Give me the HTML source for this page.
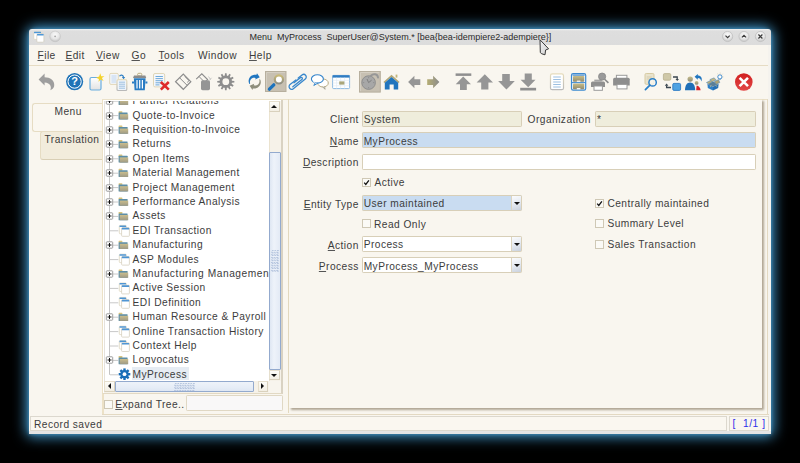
<!DOCTYPE html>
<html><head><meta charset="utf-8">
<style>
*{box-sizing:border-box}
html,body{margin:0;padding:0}
body{width:800px;height:463px;background:#000;position:relative;overflow:hidden;font-family:"Liberation Sans",sans-serif;color:#2b2b2b}
.a{position:absolute}
.t{position:absolute;white-space:nowrap;font-size:10.2px;letter-spacing:.45px;line-height:13.4px;color:#3c3c3c}
u{text-decoration:underline;text-decoration-thickness:1px;text-underline-offset:1px;text-decoration-color:#555}
#win{left:29px;top:29px;width:742px;height:405px;background:#f9f6ef;box-shadow:0 0 3px 1px rgba(75,155,205,.5),0 0 13px 3px #4096c8;border-radius:7px 7px 3px 3px}
#title{left:29px;top:29px;width:742px;height:15.5px;background:linear-gradient(#f2f2f2,#dedede 12%,#dcdcdc);border-radius:3px 3px 0 0}
.wbtn{position:absolute;width:10px;height:10px;border-radius:50%;background:radial-gradient(circle at 50% 30%,#fdfdfd,#e4e4e4 60%,#b9b9b9);box-shadow:0 0.5px 0.5px #999}
.fld{position:absolute;height:16px;border:1px solid #d8cfb8;border-radius:1.2px;background:#fff}
.cb{position:absolute;width:9px;height:9px;border:1px solid #cfc8b5;background:#fbfaf6}
.dd{position:absolute;right:0;top:0;width:10px;height:100%;background:linear-gradient(160deg,#fbfcfe,#e3e8f0 55%,#c9d1dd);border-left:1px solid #ddd5c0}
.dd:after{content:"";position:absolute;left:2px;top:6px;border-left:3px solid transparent;border-right:3px solid transparent;border-top:3px solid #111}
</style></head>
<body>
<div id="win" class="a"></div>
<div id="title" class="a"></div>
<!-- title icons -->
<svg class="a" style="left:29px;top:28px" width="40" height="18" viewBox="29 28 40 18">
<defs><radialGradient id="gBtn" cx="50%" cy="35%" r="65%"><stop offset="0" stop-color="#fafafa"/><stop offset=".6" stop-color="#e6e6e6"/><stop offset="1" stop-color="#c4c4c4"/></radialGradient></defs>
<rect x="33.8" y="31.8" width="7.4" height="7.6" rx="1" fill="#fff" stroke="#d9d2bc" stroke-width=".7"/>
<rect x="34" y="31.8" width="7" height="1.5" rx=".5" fill="#4f97d6"/>
<rect x="36.8" y="33.9" width="7.1" height="8.3" rx="1" fill="#fff" stroke="#d0cbbb" stroke-width=".7"/>
<rect x="37" y="33.9" width="6.7" height="1.5" rx=".5" fill="#4f97d6"/>
<circle cx="55.1" cy="36.4" r="5.3" fill="url(#gBtn)" stroke="#c2c2c2" stroke-width=".6"/>
<circle cx="55.1" cy="36.4" r=".8" fill="#999"/>
</svg>
<div class="t" style="left:249.5px;top:31.1px;font-size:9px;letter-spacing:0;color:#2a2a2a">Menu&nbsp; MyProcess&nbsp; SuperUser@System.* [bea{bea-idempiere2-adempiere}]</div>
<svg class="a" style="left:715px;top:28px" width="56" height="18" viewBox="715 28 56 18">
<g stroke="#bdbdbd" stroke-width=".7" fill="url(#gBtn)">
<circle cx="727.6" cy="36.5" r="5.1"/><circle cx="744" cy="36.5" r="5.1"/><circle cx="760.4" cy="36.5" r="5.1"/></g>
<g stroke="#3a3a3a" stroke-width="1.2" fill="none">
<path d="M725.5 35.6 L727.6 37.6 L729.7 35.6"/>
<path d="M741.9 37.4 L744 35.4 L746.1 37.4"/>
<path d="M758.4 34.5 L762.4 38.5 M762.4 34.5 L758.4 38.5"/></g>
</svg>
<div class="a" style="left:768.6px;top:44.5px;width:1px;height:21px;background:#e6dcc4"></div>
<!-- menu bar -->
<div class="a" style="left:29px;top:65px;width:742px;height:1px;background:#e6dcc4"></div>
<div class="t" style="left:37.5px;top:49px"><u>F</u>ile</div>
<div class="t" style="left:65.5px;top:49px"><u>E</u>dit</div>
<div class="t" style="left:96px;top:49px"><u>V</u>iew</div>
<div class="t" style="left:131.5px;top:49px"><u>G</u>o</div>
<div class="t" style="left:158.5px;top:49px"><u>T</u>ools</div>
<div class="t" style="left:198px;top:49px">Window</div>
<div class="t" style="left:249px;top:49px"><u>H</u>elp</div>

<!-- tabs -->
<div class="a" style="left:32px;top:103px;width:72px;height:29px;border:1px solid #e6dcc3;border-right:none;border-radius:3px 0 0 3px;background:#faf7f0"></div>
<div class="t" style="left:54.5px;top:104.5px">Menu</div>
<div class="a" style="left:40px;top:131px;width:64px;height:28.6px;border:1px solid #e6dcc3;border-bottom-color:#d9cfb5;border-right:none;border-radius:3px 0 0 3px;background:#f2ecdc"></div>
<div class="t" style="left:44.5px;top:133px">Translation</div>

<!-- tree panel -->
<div class="a" style="left:102px;top:99.3px;width:1.5px;height:315px;background:#ece1c6"></div>
<div class="a" style="left:102px;top:413.8px;width:183px;height:1px;background:#e3d9c2"></div>
<div class="a" style="left:102px;top:99.3px;width:181px;height:294.4px;border-left:1.5px solid #ece1c6;border-top:1.3px solid #ece2c8;border-right:2.2px solid #d9d2c2;border-bottom:1.6px solid #e2d9c4;background:#fff"></div>
<div class="a" style="left:103.5px;top:100.6px;width:1.2px;height:281px;background:#e5e2dc"></div>
<!-- tree content -->
<div class="a" style="left:104px;top:100.5px;width:165px;height:281px;overflow:hidden">
<div class="a" style="left:27.9px;top:266.7px;width:57px;height:13.2px;background:#e6ecf3"></div>
<svg class="a" style="left:0;top:0" width="165" height="281" viewBox="104 100.5 165 281">
<defs><linearGradient id="gFold" x1="0" y1="0" x2="0" y2="1"><stop offset="0" stop-color="#cbbd8c"/><stop offset="1" stop-color="#9d9a86"/></linearGradient></defs>
<path d="M109.5 99.5 V374.3" stroke="#c4c4c4" stroke-width="1"/>
<path d="M110 100.70 H118.3" stroke="#c8c8c8" stroke-width="1"/>
<rect x="106.3" y="97.30" width="6.4" height="6.4" rx=".7" fill="#fff" stroke="#999" stroke-width=".95"/>
<path d="M107.5 100.50 h4 M109.5 98.50 v4" stroke="#111" stroke-width="1"/>
<rect x="118.6" y="96.30" width="3.8" height="2" rx=".6" fill="#d8c37c"/>
<rect x="118.6" y="97.70" width="9" height="6.8" rx=".5" fill="#5d8ea6"/>
<rect x="119.7" y="99.30" width="8.5" height="5.2" fill="url(#gFold)"/>
<path d="M110 115.10 H118.3" stroke="#c8c8c8" stroke-width="1"/>
<rect x="106.3" y="112.30" width="6.4" height="6.4" rx=".7" fill="#fff" stroke="#999" stroke-width=".95"/>
<path d="M107.5 115.50 h4 M109.5 113.50 v4" stroke="#111" stroke-width="1"/>
<rect x="118.6" y="110.70" width="3.8" height="2" rx=".6" fill="#d8c37c"/>
<rect x="118.6" y="112.10" width="9" height="6.8" rx=".5" fill="#5d8ea6"/>
<rect x="119.7" y="113.70" width="8.5" height="5.2" fill="url(#gFold)"/>
<path d="M110 129.50 H118.3" stroke="#c8c8c8" stroke-width="1"/>
<rect x="106.3" y="126.30" width="6.4" height="6.4" rx=".7" fill="#fff" stroke="#999" stroke-width=".95"/>
<path d="M107.5 129.50 h4 M109.5 127.50 v4" stroke="#111" stroke-width="1"/>
<rect x="118.6" y="125.10" width="3.8" height="2" rx=".6" fill="#d8c37c"/>
<rect x="118.6" y="126.50" width="9" height="6.8" rx=".5" fill="#5d8ea6"/>
<rect x="119.7" y="128.10" width="8.5" height="5.2" fill="url(#gFold)"/>
<path d="M110 143.90 H118.3" stroke="#c8c8c8" stroke-width="1"/>
<rect x="106.3" y="140.30" width="6.4" height="6.4" rx=".7" fill="#fff" stroke="#999" stroke-width=".95"/>
<path d="M107.5 143.50 h4 M109.5 141.50 v4" stroke="#111" stroke-width="1"/>
<rect x="118.6" y="139.50" width="3.8" height="2" rx=".6" fill="#d8c37c"/>
<rect x="118.6" y="140.90" width="9" height="6.8" rx=".5" fill="#5d8ea6"/>
<rect x="119.7" y="142.50" width="8.5" height="5.2" fill="url(#gFold)"/>
<path d="M110 158.30 H118.3" stroke="#c8c8c8" stroke-width="1"/>
<rect x="106.3" y="155.30" width="6.4" height="6.4" rx=".7" fill="#fff" stroke="#999" stroke-width=".95"/>
<path d="M107.5 158.50 h4 M109.5 156.50 v4" stroke="#111" stroke-width="1"/>
<rect x="118.6" y="153.90" width="3.8" height="2" rx=".6" fill="#d8c37c"/>
<rect x="118.6" y="155.30" width="9" height="6.8" rx=".5" fill="#5d8ea6"/>
<rect x="119.7" y="156.90" width="8.5" height="5.2" fill="url(#gFold)"/>
<path d="M110 172.70 H118.3" stroke="#c8c8c8" stroke-width="1"/>
<rect x="106.3" y="169.30" width="6.4" height="6.4" rx=".7" fill="#fff" stroke="#999" stroke-width=".95"/>
<path d="M107.5 172.50 h4 M109.5 170.50 v4" stroke="#111" stroke-width="1"/>
<rect x="118.6" y="168.30" width="3.8" height="2" rx=".6" fill="#d8c37c"/>
<rect x="118.6" y="169.70" width="9" height="6.8" rx=".5" fill="#5d8ea6"/>
<rect x="119.7" y="171.30" width="8.5" height="5.2" fill="url(#gFold)"/>
<path d="M110 187.10 H118.3" stroke="#c8c8c8" stroke-width="1"/>
<rect x="106.3" y="184.30" width="6.4" height="6.4" rx=".7" fill="#fff" stroke="#999" stroke-width=".95"/>
<path d="M107.5 187.50 h4 M109.5 185.50 v4" stroke="#111" stroke-width="1"/>
<rect x="118.6" y="182.70" width="3.8" height="2" rx=".6" fill="#d8c37c"/>
<rect x="118.6" y="184.10" width="9" height="6.8" rx=".5" fill="#5d8ea6"/>
<rect x="119.7" y="185.70" width="8.5" height="5.2" fill="url(#gFold)"/>
<path d="M110 201.50 H118.3" stroke="#c8c8c8" stroke-width="1"/>
<rect x="106.3" y="198.30" width="6.4" height="6.4" rx=".7" fill="#fff" stroke="#999" stroke-width=".95"/>
<path d="M107.5 201.50 h4 M109.5 199.50 v4" stroke="#111" stroke-width="1"/>
<rect x="118.6" y="197.10" width="3.8" height="2" rx=".6" fill="#d8c37c"/>
<rect x="118.6" y="198.50" width="9" height="6.8" rx=".5" fill="#5d8ea6"/>
<rect x="119.7" y="200.10" width="8.5" height="5.2" fill="url(#gFold)"/>
<path d="M110 215.90 H118.3" stroke="#c8c8c8" stroke-width="1"/>
<rect x="106.3" y="212.30" width="6.4" height="6.4" rx=".7" fill="#fff" stroke="#999" stroke-width=".95"/>
<path d="M107.5 215.50 h4 M109.5 213.50 v4" stroke="#111" stroke-width="1"/>
<rect x="118.6" y="211.50" width="3.8" height="2" rx=".6" fill="#d8c37c"/>
<rect x="118.6" y="212.90" width="9" height="6.8" rx=".5" fill="#5d8ea6"/>
<rect x="119.7" y="214.50" width="8.5" height="5.2" fill="url(#gFold)"/>
<path d="M110 230.30 H118.3" stroke="#c8c8c8" stroke-width="1"/>
<rect x="119.3" y="224.90" width="7" height="8.4" rx=".8" fill="#fff" stroke="#ddd5bf" stroke-width=".8"/>
<rect x="119.5" y="224.90" width="6.6" height="1.6" rx=".5" fill="#4f95d3"/>
<rect x="121.6" y="227.20" width="7.8" height="8.6" rx=".8" fill="#fff" stroke="#d5cfbf" stroke-width=".8"/>
<rect x="121.8" y="227.20" width="7.4" height="1.7" rx=".5" fill="#4f95d3"/>
<path d="M110 244.70 H118.3" stroke="#c8c8c8" stroke-width="1"/>
<rect x="106.3" y="241.30" width="6.4" height="6.4" rx=".7" fill="#fff" stroke="#999" stroke-width=".95"/>
<path d="M107.5 244.50 h4 M109.5 242.50 v4" stroke="#111" stroke-width="1"/>
<rect x="118.6" y="240.30" width="3.8" height="2" rx=".6" fill="#d8c37c"/>
<rect x="118.6" y="241.70" width="9" height="6.8" rx=".5" fill="#5d8ea6"/>
<rect x="119.7" y="243.30" width="8.5" height="5.2" fill="url(#gFold)"/>
<path d="M110 259.10 H118.3" stroke="#c8c8c8" stroke-width="1"/>
<rect x="119.3" y="253.70" width="7" height="8.4" rx=".8" fill="#fff" stroke="#ddd5bf" stroke-width=".8"/>
<rect x="119.5" y="253.70" width="6.6" height="1.6" rx=".5" fill="#4f95d3"/>
<rect x="121.6" y="256.00" width="7.8" height="8.6" rx=".8" fill="#fff" stroke="#d5cfbf" stroke-width=".8"/>
<rect x="121.8" y="256.00" width="7.4" height="1.7" rx=".5" fill="#4f95d3"/>
<path d="M110 273.50 H118.3" stroke="#c8c8c8" stroke-width="1"/>
<rect x="106.3" y="270.30" width="6.4" height="6.4" rx=".7" fill="#fff" stroke="#999" stroke-width=".95"/>
<path d="M107.5 273.50 h4 M109.5 271.50 v4" stroke="#111" stroke-width="1"/>
<rect x="118.6" y="269.10" width="3.8" height="2" rx=".6" fill="#d8c37c"/>
<rect x="118.6" y="270.50" width="9" height="6.8" rx=".5" fill="#5d8ea6"/>
<rect x="119.7" y="272.10" width="8.5" height="5.2" fill="url(#gFold)"/>
<path d="M110 287.90 H118.3" stroke="#c8c8c8" stroke-width="1"/>
<rect x="119.3" y="282.50" width="7" height="8.4" rx=".8" fill="#fff" stroke="#ddd5bf" stroke-width=".8"/>
<rect x="119.5" y="282.50" width="6.6" height="1.6" rx=".5" fill="#4f95d3"/>
<rect x="121.6" y="284.80" width="7.8" height="8.6" rx=".8" fill="#fff" stroke="#d5cfbf" stroke-width=".8"/>
<rect x="121.8" y="284.80" width="7.4" height="1.7" rx=".5" fill="#4f95d3"/>
<path d="M110 302.30 H118.3" stroke="#c8c8c8" stroke-width="1"/>
<rect x="119.3" y="296.90" width="7" height="8.4" rx=".8" fill="#fff" stroke="#ddd5bf" stroke-width=".8"/>
<rect x="119.5" y="296.90" width="6.6" height="1.6" rx=".5" fill="#4f95d3"/>
<rect x="121.6" y="299.20" width="7.8" height="8.6" rx=".8" fill="#fff" stroke="#d5cfbf" stroke-width=".8"/>
<rect x="121.8" y="299.20" width="7.4" height="1.7" rx=".5" fill="#4f95d3"/>
<path d="M110 316.70 H118.3" stroke="#c8c8c8" stroke-width="1"/>
<rect x="106.3" y="313.30" width="6.4" height="6.4" rx=".7" fill="#fff" stroke="#999" stroke-width=".95"/>
<path d="M107.5 316.50 h4 M109.5 314.50 v4" stroke="#111" stroke-width="1"/>
<rect x="118.6" y="312.30" width="3.8" height="2" rx=".6" fill="#d8c37c"/>
<rect x="118.6" y="313.70" width="9" height="6.8" rx=".5" fill="#5d8ea6"/>
<rect x="119.7" y="315.30" width="8.5" height="5.2" fill="url(#gFold)"/>
<path d="M110 331.10 H118.3" stroke="#c8c8c8" stroke-width="1"/>
<rect x="119.3" y="325.70" width="7" height="8.4" rx=".8" fill="#fff" stroke="#ddd5bf" stroke-width=".8"/>
<rect x="119.5" y="325.70" width="6.6" height="1.6" rx=".5" fill="#4f95d3"/>
<rect x="121.6" y="328.00" width="7.8" height="8.6" rx=".8" fill="#fff" stroke="#d5cfbf" stroke-width=".8"/>
<rect x="121.8" y="328.00" width="7.4" height="1.7" rx=".5" fill="#4f95d3"/>
<path d="M110 345.50 H118.3" stroke="#c8c8c8" stroke-width="1"/>
<rect x="119.3" y="340.10" width="7" height="8.4" rx=".8" fill="#fff" stroke="#ddd5bf" stroke-width=".8"/>
<rect x="119.5" y="340.10" width="6.6" height="1.6" rx=".5" fill="#4f95d3"/>
<rect x="121.6" y="342.40" width="7.8" height="8.6" rx=".8" fill="#fff" stroke="#d5cfbf" stroke-width=".8"/>
<rect x="121.8" y="342.40" width="7.4" height="1.7" rx=".5" fill="#4f95d3"/>
<path d="M110 359.90 H118.3" stroke="#c8c8c8" stroke-width="1"/>
<rect x="106.3" y="356.30" width="6.4" height="6.4" rx=".7" fill="#fff" stroke="#999" stroke-width=".95"/>
<path d="M107.5 359.50 h4 M109.5 357.50 v4" stroke="#111" stroke-width="1"/>
<rect x="118.6" y="355.50" width="3.8" height="2" rx=".6" fill="#d8c37c"/>
<rect x="118.6" y="356.90" width="9" height="6.8" rx=".5" fill="#5d8ea6"/>
<rect x="119.7" y="358.50" width="8.5" height="5.2" fill="url(#gFold)"/>
<path d="M110 374.30 H118.3" stroke="#c8c8c8" stroke-width="1"/>
<g transform="translate(124.5 373.70)" fill="#1a6fb8"><circle r="4.2"/><rect x="-1.2" y="-5.8" width="2.4" height="2.6" transform="rotate(0)"/><rect x="-1.2" y="-5.8" width="2.4" height="2.6" transform="rotate(45)"/><rect x="-1.2" y="-5.8" width="2.4" height="2.6" transform="rotate(90)"/><rect x="-1.2" y="-5.8" width="2.4" height="2.6" transform="rotate(135)"/><rect x="-1.2" y="-5.8" width="2.4" height="2.6" transform="rotate(180)"/><rect x="-1.2" y="-5.8" width="2.4" height="2.6" transform="rotate(225)"/><rect x="-1.2" y="-5.8" width="2.4" height="2.6" transform="rotate(270)"/><rect x="-1.2" y="-5.8" width="2.4" height="2.6" transform="rotate(315)"/><circle r="1.9" fill="#fff"/></g>
</svg>
<div class="t" style="left:28.6px;top:-6.4px">Partner Relations</div>
<div class="t" style="left:28.6px;top:8.0px">Quote-to-Invoice</div>
<div class="t" style="left:28.6px;top:22.4px">Requisition-to-Invoice</div>
<div class="t" style="left:28.6px;top:36.8px">Returns</div>
<div class="t" style="left:28.6px;top:51.2px">Open Items</div>
<div class="t" style="left:28.6px;top:65.6px">Material Management</div>
<div class="t" style="left:28.6px;top:80.0px">Project Management</div>
<div class="t" style="left:28.6px;top:94.4px">Performance Analysis</div>
<div class="t" style="left:28.6px;top:108.8px">Assets</div>
<div class="t" style="left:28.6px;top:123.2px">EDI Transaction</div>
<div class="t" style="left:28.6px;top:137.6px">Manufacturing</div>
<div class="t" style="left:28.6px;top:152.0px">ASP Modules</div>
<div class="t" style="left:28.6px;top:166.4px;letter-spacing:.55px">Manufacturing Management</div>
<div class="t" style="left:28.6px;top:180.8px">Active Session</div>
<div class="t" style="left:28.6px;top:195.2px">EDI Definition</div>
<div class="t" style="left:28.6px;top:209.6px">Human Resource &amp; Payroll</div>
<div class="t" style="left:28.6px;top:224.0px">Online Transaction History</div>
<div class="t" style="left:28.6px;top:238.4px">Context Help</div>
<div class="t" style="left:28.6px;top:252.8px">Logvocatus</div>
<div class="t" style="left:28.6px;top:267.2px">MyProcess</div>
</div>
<!-- v scrollbar -->
<div class="a" style="left:268.8px;top:100.5px;width:12px;height:281px;background:#f6f2e9;border-left:1px solid #ebe3cf"></div>
<div class="a" style="left:268.8px;top:101.3px;width:11.5px;height:11px;background:linear-gradient(#fdfcf8,#f3efe4);border:1px solid #e6dfcd;border-right-color:#d9d1bd;border-bottom-color:#d9d1bd"></div>
<div class="a" style="left:271.4px;top:104.6px;width:0;height:0;border-left:3.3px solid transparent;border-right:3.3px solid transparent;border-bottom:3.6px solid #111"></div>
<div class="a" style="left:268.9px;top:152.2px;width:12px;height:217.6px;border:1px solid #93aace;border-radius:1px;background:linear-gradient(90deg,#dfe7f3,#eef3fa 40%,#e3eaf5)"></div>
<div class="a" style="left:271px;top:250.4px;width:8.4px;height:21.6px;background:repeating-conic-gradient(#b3c3dd 0 25%,transparent 0 50%) 0 0/2.6px 2.6px"></div>
<div class="a" style="left:268.8px;top:369.8px;width:11.5px;height:10.5px;background:linear-gradient(#fdfcf8,#f3efe4);border:1px solid #e6dfcd;border-right-color:#d9d1bd;border-bottom-color:#d9d1bd"></div>
<div class="a" style="left:271.4px;top:373.6px;width:0;height:0;border-left:3.3px solid transparent;border-right:3.3px solid transparent;border-top:3.6px solid #111"></div>
<!-- h scrollbar -->
<div class="a" style="left:103.5px;top:380.8px;width:166px;height:12px;background:#f6f2e9"></div>
<div class="a" style="left:104.1px;top:380.9px;width:10.6px;height:11.4px;background:linear-gradient(#fdfcf8,#f3efe4);border:1px solid #e6dfcd;border-right-color:#d9d1bd;border-bottom-color:#d9d1bd"></div>
<div class="a" style="left:108.2px;top:383.4px;width:0;height:0;border-top:3.3px solid transparent;border-bottom:3.3px solid transparent;border-right:3.6px solid #111"></div>
<div class="a" style="left:115px;top:380.9px;width:138.8px;height:11.4px;border:1px solid #93aace;border-radius:1px;background:linear-gradient(#eef3fa,#e6edf7 60%,#dfe7f3)"></div>
<div class="a" style="left:173.5px;top:383.2px;width:21.6px;height:7.6px;background:repeating-conic-gradient(#b3c3dd 0 25%,transparent 0 50%) 0 0/2.6px 2.6px"></div>
<div class="a" style="left:257.6px;top:380.9px;width:10.2px;height:11.4px;background:linear-gradient(#fdfcf8,#f3efe4);border:1px solid #e6dfcd;border-right-color:#d9d1bd;border-bottom-color:#d9d1bd"></div>
<div class="a" style="left:261.4px;top:383.4px;width:0;height:0;border-top:3.3px solid transparent;border-bottom:3.3px solid transparent;border-left:3.6px solid #111"></div>
<div class="a" style="left:268.8px;top:380.8px;width:12px;height:12px;background:#f8f5ee"></div>


<!-- split container top line -->
<div class="a" style="left:102px;top:99px;width:667px;height:1.4px;background:#ebe1c8"></div>
<!-- form panel -->
<div class="a" style="left:287.6px;top:99.4px;width:1.4px;height:313.5px;background:#e3d9bf"></div>
<div class="a" style="left:288.5px;top:99.4px;width:473.3px;height:308.6px;border-top:1px solid #ebe1c8;box-shadow:1.6px 1.6px 2px rgba(135,122,98,.65);background:#f9f6ef"></div>
<div class="a" style="left:767.2px;top:99px;width:1px;height:315.5px;background:#e3d9c2"></div><div class="a" style="left:768.3px;top:44.5px;width:2.7px;height:389.5px;background:#f5f3ee"></div>
<div class="a" style="left:285px;top:413.8px;width:483.5px;height:1px;background:#e3d9c2"></div>

<div class="t" style="right:441.2px;top:113.3px;text-align:right">Client</div>
<div class="fld" style="left:362px;top:110.6px;width:160px;background:#efeddc"></div>
<div class="t" style="left:363.7px;top:113.3px">System</div>
<div class="t" style="left:527.6px;top:113.3px">Organization</div>
<div class="fld" style="left:595px;top:110.6px;width:160.6px;background:#efeddc"></div>
<div class="t" style="left:597px;top:113.3px">*</div>

<div class="t" style="right:441.2px;top:134.7px;text-align:right"><u>N</u>ame</div>
<div class="fld" style="left:362px;top:132.4px;width:393.6px;background:#c9dcf1"></div>
<div class="t" style="left:363.7px;top:134.7px">MyProcess</div>

<div class="t" style="right:441.2px;top:156.1px;text-align:right"><u>D</u>escription</div>
<div class="fld" style="left:362px;top:154px;width:393.6px;background:#fff"></div>

<div class="cb" style="left:362px;top:178.2px"></div>
<svg class="a" style="left:362px;top:178.2px" width="9" height="9" viewBox="0 0 9 9"><path d="M2.2 4.6 L3.8 6.4 L6.9 2.4" fill="none" stroke="#111" stroke-width="1.3"/></svg>
<div class="t" style="left:374.4px;top:176.3px">Active</div>

<div class="t" style="right:441.2px;top:197.5px;text-align:right"><u>E</u>ntity Type</div>
<div class="fld" style="left:362px;top:195.3px;width:159.8px;height:15.6px;background:#c9dcf1"><div class="dd"></div></div>
<div class="t" style="left:363.7px;top:197.2px">User maintained</div>
<div class="cb" style="left:594.6px;top:199.4px"></div>
<svg class="a" style="left:594.6px;top:199.4px" width="9" height="9" viewBox="0 0 9 9"><path d="M2.2 4.6 L3.8 6.4 L6.9 2.4" fill="none" stroke="#111" stroke-width="1.3"/></svg>
<div class="t" style="left:607.4px;top:197.1px">Centrally maintained</div>

<div class="cb" style="left:362px;top:219.4px"></div>
<div class="t" style="left:374px;top:217.7px">Read Only</div>
<div class="cb" style="left:594.6px;top:219.4px"></div>
<div class="t" style="left:607.4px;top:217.3px">Summary Level</div>

<div class="t" style="right:441.2px;top:238.8px;text-align:right"><u>A</u>ction</div>
<div class="fld" style="left:362px;top:235.9px;width:159.8px;height:15.8px;background:#fff"><div class="dd"></div></div>
<div class="t" style="left:363.7px;top:238.0px">Process</div>
<div class="cb" style="left:594.6px;top:240.4px"></div>
<div class="t" style="left:607.4px;top:237.9px">Sales Transaction</div>

<div class="t" style="right:441.2px;top:259.8px;text-align:right"><u>P</u>rocess</div>
<div class="fld" style="left:362px;top:257.2px;width:159.8px;height:16.2px;background:#fff"><div class="dd"></div></div>
<div class="t" style="left:363.7px;top:259.5px">MyProcess_MyProcess</div>

<!-- expand tree -->
<div class="cb" style="left:103.6px;top:399.8px"></div>
<div class="t" style="left:115.3px;top:398.4px"><u>E</u>xpand Tree..</div>
<div class="fld" style="left:185.8px;top:395.2px;width:97px;height:16.2px;background:#f9f8f8;border-color:#e0d8c4"></div>

<!-- status bar -->
<div class="a" style="left:30px;top:416px;width:697px;height:15px;border:1px solid #dcd8ce;background:#faf7f0"></div>
<div class="t" style="left:34px;top:418px">Record saved</div>
<div class="a" style="left:728.5px;top:416px;width:40px;height:15px;border:1px solid #dcd8ce;background:#faf7f0"></div>
<div class="t" style="left:732.6px;top:416.8px;color:#2f2fea;letter-spacing:.6px">[&nbsp; 1/1 ]</div>
<div class="a" style="left:29px;top:431px;width:742px;height:3px;background:#e4e4e4"></div>


<svg class="a" style="left:0;top:0" width="800" height="463" viewBox="0 0 800 463">
<defs>
 <linearGradient id="gDoc" x1="0" y1="0" x2="0" y2="1"><stop offset="0" stop-color="#e6dcbc"/><stop offset="1" stop-color="#b9b9b9"/></linearGradient>
 <linearGradient id="gOl" x1="0" y1="0" x2="1" y2="0"><stop offset="0" stop-color="#b5ad74"/><stop offset="1" stop-color="#8c8c8c"/></linearGradient>
 <linearGradient id="gOlV" x1="0" y1="0" x2="0" y2="1"><stop offset="0" stop-color="#c9bc84"/><stop offset="1" stop-color="#8f8a70"/></linearGradient>
 <linearGradient id="gNew" x1="0" y1="0" x2="0" y2="1"><stop offset="0" stop-color="#ffffff"/><stop offset="1" stop-color="#e2e2e2"/></linearGradient>
 <linearGradient id="gLens" x1="0" y1="0" x2="0" y2="1"><stop offset="0" stop-color="#c9b977"/><stop offset="1" stop-color="#8f8f84"/></linearGradient>
 <linearGradient id="gRed" x1="0" y1="0" x2="0" y2="1"><stop offset="0" stop-color="#d11f1f"/><stop offset="1" stop-color="#e24848"/></linearGradient>
</defs>
<!-- undo -->
<path d="M38.6 79.6 L44.6 73.6 L44.6 77.2 C50 77.2 55 80.5 54.2 86 C53.8 88 52 89.6 50.3 90.3 C51.8 87 50.5 83 44.6 82.6 L44.6 85.6 Z" fill="#9e9e9e"/>
<!-- help -->
<circle cx="74.6" cy="81.6" r="8.6" fill="#1f73b7"/>
<circle cx="74.6" cy="81.6" r="6.6" fill="none" stroke="#fff" stroke-width="1"/>
<text x="74.6" y="85.4" text-anchor="middle" font-family="Liberation Sans" font-weight="bold" font-size="11" fill="#fff">?</text>
<!-- new -->
<rect x="90" y="77.5" width="11" height="12.5" rx="1.5" fill="url(#gNew)" stroke="#6aaedf" stroke-width="1.2"/>
<path d="M100.3 73.2 L101.2 76.3 L104.4 76.2 L101.9 78.1 L103.6 80.9 L100.6 79.6 L98.5 82.1 L98.9 78.9 L96 77.7 L99.1 76.6 Z" fill="#f4d22a"/>
<!-- copy -->
<rect x="109.7" y="73.4" width="8.6" height="11" rx="1.3" fill="#f1f5fb" stroke="#e2d7b8" stroke-width="1"/>
<path d="M111.5 76h5M111.5 78h5M111.5 80h5M111.5 82h5" stroke="#bcd3ea" stroke-width=".9"/>
<rect x="117" y="79.7" width="9.8" height="10.8" rx="1.3" fill="#eef4fb" stroke="url(#gDoc)" stroke-width="1.2"/>
<path d="M119 82.2h6M119 84.2h6M119 86.2h6M119 88.2h6" stroke="#9fc0e0" stroke-width="1"/>
<path d="M119.5 76.3 C120.5 74.5 123 74.6 123.6 77.4" fill="none" stroke="#2f7fc4" stroke-width="1.2"/>
<path d="M121.8 77 L125.2 76.9 L123.6 79.3 Z" fill="#2f7fc4"/>
<!-- trash -->
<rect x="137.6" y="73.3" width="4.2" height="2.6" rx="1.2" fill="none" stroke="#b9ac7e" stroke-width="1"/>
<path d="M133 78 L134 75.6 L145.4 75.6 L146.2 78 Z" fill="#8c8c8c"/>
<path d="M133.8 78.3 L145.6 78.3 L144.8 90.3 L134.6 90.3 Z" fill="#2a7cc3"/>
<path d="M132 81.5 h2 v2 h-2z M145.4 81.5 h2 v2 h-2z" fill="#2a7cc3"/>
<path d="M137 80v8.6 M139.7 80v8.6 M142.4 80v8.6" stroke="#fff" stroke-width="1.2"/>
<!-- delete -->
<rect x="153.5" y="73.5" width="11.2" height="13.4" rx="1.5" fill="#f4f7fb" stroke="#e0d6b7" stroke-width="1"/>
<path d="M155.5 76.5h7.4M155.5 78.6h7.4M155.5 80.7h7.4M155.5 82.8h6M155.5 84.9h4" stroke="#5d9fd6" stroke-width=".9"/>
<path d="M160.8 82 L168.8 89.6 M168.8 82 L160.8 89.6" stroke="#de2a2a" stroke-width="2.6"/>
<!-- save (diamond) -->
<path d="M175.6 81.7 L183.3 74 L190.8 81.7 L183.3 89.3 Z" fill="none" stroke="#8c8c8c" stroke-width="1.2"/>
<path d="M179.6 77.8 L187.3 85.5 M185 76.6 L189 80.6 L187.2 82.4" fill="none" stroke="#8c8c8c" stroke-width="1"/>
<!-- save & new -->
<path d="M196.2 79.2 L201.8 73.8 L207.6 79.6 L202 85" fill="none" stroke="#8c8c8c" stroke-width="1.1"/>
<path d="M199 76.5 L204.5 82" fill="none" stroke="#8c8c8c" stroke-width="1"/>
<rect x="201" y="80.2" width="9" height="10" rx="1.6" fill="#959595"/>
<path d="M208.5 76.5 L210.5 79.5 M211.5 77.8 L209.3 80.5" stroke="#bbb" stroke-width=".8"/>
<!-- gear -->
<path d="M224.20 75.71 L224.78 75.59 L224.98 73.14 L226.62 73.14 L226.82 75.59 L227.41 75.71 L227.97 75.89 L229.37 73.87 L230.79 74.70 L229.74 76.92 L230.18 77.32 L230.58 77.76 L232.80 76.71 L233.63 78.13 L231.61 79.53 L231.79 80.10 L231.91 80.68 L234.36 80.88 L234.36 82.52 L231.91 82.72 L231.79 83.31 L231.61 83.87 L233.63 85.27 L232.80 86.69 L230.58 85.64 L230.18 86.08 L229.74 86.48 L230.79 88.70 L229.37 89.53 L227.97 87.51 L227.40 87.69 L226.82 87.81 L226.62 90.26 L224.98 90.26 L224.78 87.81 L224.19 87.69 L223.63 87.51 L222.23 89.53 L220.81 88.70 L221.86 86.48 L221.42 86.08 L221.02 85.64 L218.80 86.69 L217.97 85.27 L219.99 83.87 L219.81 83.30 L219.69 82.72 L217.24 82.52 L217.24 80.88 L219.69 80.68 L219.81 80.09 L219.99 79.53 L217.97 78.13 L218.80 76.71 L221.02 77.76 L221.42 77.32 L221.86 76.92 L220.81 74.70 L222.23 73.87 L223.63 75.89 Z M225.80 81.70 m-3.4 0 a3.4 3.4 0 1 0 6.8 0 a3.4 3.4 0 1 0 -6.8 0z" fill="#8d8d8d" fill-rule="evenodd"/>
<!-- refresh -->
<path d="M249.44 84.05 L249.14 83.46 L248.90 82.83 L248.73 82.17 L248.64 81.49 L248.63 80.80 L248.69 80.10 L248.84 79.41 L249.07 78.73 L249.38 78.08 L249.76 77.45 L250.22 76.87 L250.74 76.34 L251.33 75.87 L251.97 75.47 L252.66 75.14 L253.39 74.89 L254.16 74.72 L254.94 74.63 L255.74 74.64 L256.54 74.74 L256.95 73.20 L259.77 77.37 L255.24 79.57 L255.66 78.03 L255.26 77.88 L254.83 77.77 L254.39 77.72 L253.94 77.71 L253.49 77.76 L253.04 77.86 L252.59 78.02 L252.16 78.23 L251.75 78.49 L251.37 78.80 L251.02 79.16 L250.71 79.57 L250.44 80.01 L250.23 80.48 L250.06 80.99 L249.96 81.52 L249.92 82.06 L249.94 82.61 L250.02 83.17 L250.17 83.71 Z" fill="#2176c0"/>
<path d="M259.96 79.15 L260.26 79.74 L260.50 80.37 L260.67 81.03 L260.76 81.71 L260.77 82.40 L260.71 83.10 L260.56 83.79 L260.33 84.47 L260.02 85.12 L259.64 85.75 L259.18 86.33 L258.66 86.86 L258.07 87.33 L257.43 87.73 L256.74 88.06 L256.01 88.31 L255.24 88.48 L254.46 88.57 L253.66 88.56 L252.86 88.46 L252.45 90.00 L249.63 85.83 L254.16 83.63 L253.74 85.17 L254.14 85.32 L254.57 85.43 L255.01 85.48 L255.46 85.49 L255.91 85.44 L256.36 85.34 L256.81 85.18 L257.24 84.97 L257.65 84.71 L258.03 84.40 L258.38 84.04 L258.69 83.63 L258.96 83.19 L259.17 82.72 L259.34 82.21 L259.44 81.68 L259.48 81.14 L259.46 80.59 L259.38 80.03 L259.23 79.49 Z" fill="#8e8e7c"/>
<!-- find pressed -->
<rect x="265.5" y="71.5" width="20.5" height="20" fill="#c7c0b2" stroke="#b7af9e" stroke-width="1"/>
<path d="M266.5 90.5 V72.5 H285" fill="none" stroke="#d4cec2" stroke-width="1"/>
<path d="M269.4 89.2 L273.8 84.8" stroke="#1c72bd" stroke-width="3.3" stroke-linecap="round"/>
<circle cx="278.9" cy="79.4" r="4.1" fill="#fff" stroke="url(#gLens)" stroke-width="2.2"/>
<!-- paperclip -->
<g transform="translate(297.9 81.6) rotate(-39)" fill="none" stroke="#3887cc" stroke-width="1.3" stroke-linecap="round">
<path d="M2.5 -2.6 H7.4 A2.6 2.6 0 0 1 7.4 2.6 H-8 A2.6 2.6 0 0 1 -8 -2.6 H-0.5"/>
<path d="M-7.2 0.8 H4.8 A1.2 1.2 0 0 0 4.8 -1.5 H-3.8"/>
</g>
<!-- chat -->
<ellipse cx="323" cy="83" rx="5.3" ry="4" fill="#fff" stroke="#b9ad88" stroke-width="1"/>
<path d="M322.6 86.7 L325 89.3 L324.6 86.4" fill="#fff" stroke="#9a9a8a" stroke-width=".9"/>
<ellipse cx="317.4" cy="78.9" rx="6" ry="4.2" fill="#fff" stroke="#3585cc" stroke-width="1.1"/>
<path d="M315.2 82.8 L313.8 85.5 L318 83" fill="#fff" stroke="#3585cc" stroke-width="1"/>
<path d="M313.2 80 C312.8 82 314 82.7 315.5 82.9" fill="#fff" stroke="none"/>
<!-- calendar -->
<rect x="332.6" y="75.4" width="17" height="13.2" rx="1" fill="#fff" stroke="#7fb1de" stroke-width=".9"/>
<rect x="332.6" y="75.2" width="17" height="2.4" fill="#2f7cc2"/>
<path d="M332.6 80.3h17M332.6 83h17M332.6 85.8h17 M336.6 77.6v11 M340.6 77.6v11 M344.6 77.6v11" stroke="#dde8f3" stroke-width=".6"/>
<rect x="339.2" y="81.4" width="5.2" height="3.2" fill="#aaa67a"/>
<!-- history pressed -->
<rect x="359.5" y="71.5" width="20.8" height="20.6" fill="#c7c0b2" stroke="#b7af9e" stroke-width="1"/>
<path d="M360.5 91.1 V72.5 H379.3" fill="none" stroke="#d4cec2" stroke-width="1"/>
<circle cx="368.6" cy="82.6" r="6.8" fill="#a7a7a7" stroke="#8e8e8e" stroke-width="1"/>
<path d="M368.6 76.8v1.4 M368.6 87v1.4 M362.8 82.6h1.4 M373 82.6h1.4" stroke="#8a8a8a" stroke-width=".8"/>
<path d="M368.6 82.6 L367 79 M368.6 82.6 L371.6 80.2" stroke="#7a7a7a" stroke-width=".9"/>
<path d="M370.6 76 C373.5 73.2 377.6 73.8 378 77.5" fill="none" stroke="#979797" stroke-width="2" stroke-linecap="round"/>
<!-- home -->
<path d="M383.4 82 L391.5 74.8 L399.6 82 L398.4 83 L391.5 77 L384.6 83 Z" fill="#b3a777"/>
<rect x="395.6" y="74.6" width="1.8" height="3" fill="#c5b67d"/>
<path d="M384.8 82.8 L391.5 77 L398.2 82.8 L398.2 89.6 L393.7 89.6 L393.7 84.4 L389.6 84.4 L389.6 89.6 L384.8 89.6 Z" fill="#2175bd"/>
<!-- back -->
<path d="M408.1 82 L414.4 75.7 L414.4 79.3 L420.3 79.3 L420.3 85.1 L414.4 85.1 L414.4 88.3 Z" fill="#969696"/>
<!-- forward -->
<path d="M439.4 82 L433.1 75.7 L433.1 79.3 L427.2 79.3 L427.2 85.1 L433.1 85.1 L433.1 88.3 Z" fill="url(#gOl)"/>
<!-- first -->
<rect x="455.6" y="73.4" width="15.7" height="2.5" fill="#8f8f8f"/>
<path d="M463.2 76.6 L471 84.2 L466.8 84.2 L466.8 90 L460 90 L460 84.2 L455.7 84.2 Z" fill="#969696"/>
<!-- previous -->
<path d="M484.8 74.3 L493 82.4 L488.4 82.4 L488.4 89.6 L481.2 89.6 L481.2 82.4 L476.6 82.4 Z" fill="#969696"/>
<!-- next -->
<path d="M506.4 89.6 L514.8 81 L509.8 81 L509.8 74.1 L502.2 74.1 L502.2 81 L498.1 81 Z" fill="#969696"/>
<!-- last -->
<path d="M528.2 87.3 L535.5 79.7 L531.8 79.7 L531.8 73.4 L524.7 73.4 L524.7 79.7 L520.6 79.7 Z" fill="#969696"/>
<rect x="520.2" y="87.8" width="15.9" height="2.7" fill="#8f8f8f"/>
<!-- report -->
<rect x="550.5" y="73.9" width="13" height="15.8" rx="1.8" fill="#fff" stroke="url(#gDoc)" stroke-width="1.2"/>
<path d="M553.2 77h7.6M553.2 79.5h7.6M553.2 82h7.6M553.2 84.5h7.6M553.2 87h7.6" stroke="#92b9de" stroke-width=".9"/>
<!-- archive -->
<rect x="571.5" y="73.6" width="14.2" height="16.6" rx="1.6" fill="#eef3f9" stroke="#3d8ad0" stroke-width="1.2"/>
<rect x="572.6" y="74.6" width="12" height="1" fill="#2f7cc2"/>
<rect x="573" y="76" width="11.2" height="5.8" rx=".8" fill="url(#gOlV)"/>
<rect x="573" y="83.5" width="11.2" height="5.8" rx=".8" fill="url(#gOlV)"/>
<path d="M572 82.6h13.4" stroke="#3d8ad0" stroke-width="1"/>
<rect x="576.8" y="80.6" width="3.6" height="1.2" fill="#fff"/>
<rect x="576.8" y="88.1" width="3.6" height="1.2" fill="#fff"/>
<!-- print preview -->
<path d="M592.5 81.4 h11 a1.5 1.5 0 0 1 1.5 1.5 v4 h-14 v-4 a1.5 1.5 0 0 1 1.5 -1.5z" fill="#8f8f8f"/>
<rect x="594.3" y="79.6" width="7.5" height="2" fill="#a5a5a5"/>
<rect x="594" y="86" width="8.4" height="4.3" fill="#fff" stroke="#9a9a9a" stroke-width="1"/>
<circle cx="602.1" cy="76.6" r="3.6" fill="#9a9a9a" stroke="#888" stroke-width=".8"/>
<path d="M604.6 79.2 L608.4 82.9" stroke="#8a8a8a" stroke-width="1.6"/>
<!-- print -->
<rect x="616.4" y="75.3" width="10.5" height="3.2" fill="#fff" stroke="#9a9a9a" stroke-width="1"/>
<path d="M614.6 77.8 h13.6 a1.5 1.5 0 0 1 1.5 1.5 v6.2 h-16.6 v-6.2 a1.5 1.5 0 0 1 1.5 -1.5z" fill="#8e8e8e"/>
<rect x="617" y="84.4" width="10" height="4.5" fill="#fff" stroke="#9a9a9a" stroke-width="1"/>
<!-- zoom across -->
<rect x="645" y="73.5" width="9" height="10.8" rx="1.2" fill="#e9e3cd" stroke="#d7cba3" stroke-width="1"/>
<path d="M646.8 77h5M646.8 79h5" stroke="#cfc5a5" stroke-width=".8"/>
<circle cx="652.6" cy="82.4" r="3.7" fill="#fff" fill-opacity=".6" stroke="#2a7fc8" stroke-width="1.5"/>
<path d="M649.9 85.1 L645.4 89.6" stroke="#2a7fc8" stroke-width="1.7" stroke-linecap="round"/>
<!-- workflow -->
<rect x="663.4" y="73.6" width="7.4" height="6.6" rx="1.2" fill="#cfc8a8" stroke="#b8b08e" stroke-width=".8"/>
<rect x="672.8" y="83.4" width="7.8" height="7" rx="1.2" fill="#4fa2e2" stroke="#2f7cc4" stroke-width=".9"/>
<path d="M673 77 L677.2 77 L677.2 79.5" fill="none" stroke="#3a4650" stroke-width="1.3"/>
<path d="M675.5 79 L679 79 L677.2 81 Z" fill="#3a4650"/>
<path d="M671 87.5 L666.6 87.5 L666.6 85.4" fill="none" stroke="#3a4650" stroke-width="1.3"/>
<path d="M664.8 85.8 L668.4 85.8 L666.6 83.6 Z" fill="#3a4650"/>
<!-- request -->
<defs><linearGradient id="gHead" x1="0" y1="0" x2="0" y2="1"><stop offset="0" stop-color="#c8bd8a"/><stop offset="1" stop-color="#8f8c7a"/></linearGradient></defs>
<circle cx="690.2" cy="79.1" r="2.7" fill="url(#gHead)"/>
<path d="M685 90.3 C685 85.3 687.2 82.6 690.1 82.6 C693 82.6 695.2 85.3 695.2 90.3 Z" fill="#1f6fb8"/>
<circle cx="696.6" cy="82.9" r="1.9" fill="url(#gHead)"/>
<path d="M696.2 90.3 L696.6 85.4 C698.6 85.6 700.4 87.5 700.6 90.3 Z" fill="#d9262a"/>
<path d="M694.6 76.8 L697.8 73.9 L697.8 75.6 C701 75.6 702.6 78.3 701.4 81.4 C700.9 79.2 699.6 78 697.8 78 L697.8 79.7 Z" fill="#2176c0"/>
<!-- product -->
<path d="M707.4 84 L713 86.8 L713 90.4 L707.8 87.9 Z" fill="#2f80c8"/>
<path d="M713 86.8 L718.6 84 L718.2 87.9 L713 90.4 Z" fill="#236fb6"/>
<path d="M707.4 84 L713 81.4 L718.6 84 L713 86.8 Z" fill="#5b7f98"/>
<path d="M706.4 82.6 L710.8 80.2 L713 81.4 L708.6 84 Z" fill="#b9ad7c" stroke="#4b88c0" stroke-width=".5"/>
<path d="M709.8 79.6 L714 77.8 L716.2 79.9 L712.2 81.7 Z" fill="#c3b684" stroke="#4b88c0" stroke-width=".5"/>
<path d="M714.4 81.4 L718.6 79.6 L719.8 82.6 L716 84.4 Z" fill="#aea275" stroke="#4b88c0" stroke-width=".5"/>
<path d="M710 87 L711.5 85.6 M716 85.6 L717.2 86.6" stroke="#b9ad7c" stroke-width=".9"/>
<circle cx="719.9" cy="76.9" r="2.1" fill="#fff" stroke="#2f80c8" stroke-width=".9"/>
<path d="M719.5 79.4 h1" stroke="#2f80c8" stroke-width=".8"/>
<path d="M717.6 73.6 l.5 .9 M720.2 72.6 v1 M722.6 73.8 l-.7 .8 M723.4 76.9 h-1" stroke="#c9c3a8" stroke-width=".7"/>
<!-- close -->
<circle cx="743.8" cy="82" r="8.8" fill="url(#gRed)"/>
<path d="M739.6 77.8 L748 86.2 M748 77.8 L739.6 86.2" stroke="#fff" stroke-width="2.6"/>
</svg>

<svg class="a" style="left:530px;top:35px" width="25" height="25" viewBox="530 35 25 25"><defs><linearGradient id="gCur" x1="0" y1="0" x2="1" y2="1"><stop offset="0" stop-color="#f4f4f4"/><stop offset="1" stop-color="#cfcfcf"/></linearGradient></defs><path d="M540 39.8 L548.6 48.8 L545.6 50 L545 54.8 L541.8 53.8 L540.3 52.6 Z" fill="url(#gCur)" stroke="#3a3a3a" stroke-width="1" stroke-linejoin="round"/></svg>
</body></html>
